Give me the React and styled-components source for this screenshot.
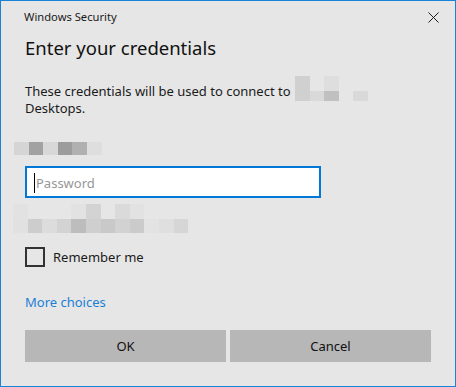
import React from "react"
import styled, { createGlobalStyle } from "styled-components"

const GlobalStyle = createGlobalStyle`
  html, body {
    margin: 0;
    padding: 0;
    background: #e6e6e6;
  }
  body {
    font-family: "Noto Sans", "Open Sans", sans-serif;
    color: #1a1a1a;
  }
`

// pixelated redaction masks, one colour per cell ("" = background)
const nameCells = [
  ["#d0d0d0", "", "#dedede", "", ""],
  ["#d0d0d0", "#d9d9d9", "#c0c0c0", "", "#d9d9d9"],
]
const userCells = [["#d5d5d5", "#a2a2a2", "#d8d8d8", "#9c9c9c", "#b0b0b0", "#dedede"]]
const domainCells = [
  ["#e2e2e2", "", "", "", "#e2e2e2", "#d3d3d3", "", "#dadada", "#e2e2e2", "", "", ""],
  ["#e1e1e1", "#cdcdcd", "#dcdcdc", "#d3d3d3", "#bdbdbd", "#cfcfcf", "#c9c9c9", "#d2d2d2", "#cbcbcb", "#e3e3e3", "#dfdfdf", "#d6d6d6"],
]

const Redaction = ({ rows, heights, className }) => (
  <Mask className={className} $cols={rows[0].length} $heights={heights}>
    {rows.flat().map((c, i) => (
      <Cell key={i} $color={c} />
    ))}
  </Mask>
)

const App = () => {
  return (
    <>
      <GlobalStyle />
      <Window>
        <TitleBar>
          <Title>Windows Security</Title>
          <CloseButton aria-label="Close">
            <svg width="11" height="11" viewBox="0 0 11 11">
              <path d="M0.5 0.5 L10.5 10.5 M10.5 0.5 L0.5 10.5" stroke="#1a1a1a" strokeWidth="1" />
            </svg>
          </CloseButton>
        </TitleBar>

        <Content>
          <Heading>Enter your credentials</Heading>
          <Message>
            These credentials will be used to connect to{" "}
            <InlineMask rows={nameCells} heights="15px 10px" />
            <br />
            Desktops.
          </Message>

          <UserMask rows={userCells} heights="13px" />

          <Field>
            <Caret />
            <Placeholder>Password</Placeholder>
          </Field>

          <DomainMask rows={domainCells} heights="15px 14px" />

          <CheckRow>
            <Box />
            <span>Remember me</span>
          </CheckRow>

          <MoreLink href="#">More choices</MoreLink>

          <Buttons>
            <Button>OK</Button>
            <Button>Cancel</Button>
          </Buttons>
        </Content>
      </Window>
    </>
  )
}

const Window = styled.div`
  box-sizing: border-box;
  width: 456px;
  height: 387px;
  border: 1px solid #1883d7;
  background: #e6e6e6;
  display: flex;
  flex-direction: column;
`

const TitleBar = styled.div`
  display: flex;
  justify-content: space-between;
  align-items: flex-start;
  padding: 8px 16px 0 23px;
  height: 26px;
`

const Title = styled.div`
  font-size: 11.2px;
  line-height: 16px;
`

const CloseButton = styled.div`
  display: flex;
  padding-top: 3px;
`

const Content = styled.div`
  display: flex;
  flex-direction: column;
  align-items: flex-start;
  padding: 0 23px 0 24px;
`

const Heading = styled.h1`
  margin: 0;
  font-size: 18.5px;
  line-height: 26px;
  font-weight: 400;
  color: #111;
`

const Message = styled.p`
  margin: 22px 0 0;
  font-size: 13px;
  line-height: 17px;
`

const Mask = styled.div`
  display: grid;
  grid-template-columns: repeat(${(p) => p.$cols}, 14.6px);
  grid-template-rows: ${(p) => p.$heights};
`

const Cell = styled.div`
  background: ${(p) => p.$color || "transparent"};
`

const InlineMask = styled(Redaction)`
  display: inline-grid;
  vertical-align: top;
  margin: -7px 0 -8px 1px;
`

const UserMask = styled(Redaction)`
  margin: 25px 0 0 -11px;
`

const DomainMask = styled(Redaction)`
  margin: 6px 0 0 -12px;
`

const Field = styled.div`
  box-sizing: border-box;
  margin-top: 11px;
  width: 296px;
  height: 32px;
  border: 2px solid #0078d7;
  background: #fff;
  display: flex;
  align-items: center;
  padding-left: 7px;
`

const Caret = styled.span`
  width: 1px;
  height: 20px;
  margin-top: 2px;
  background: #000;
`

const Placeholder = styled.span`
  margin: 2px 0 0 1px;
  font-size: 13px;
  color: #969696;
`

const CheckRow = styled.label`
  margin-top: 14px;
  display: flex;
  align-items: center;
  gap: 8px;
  font-size: 13px;
  line-height: 20px;
`

const Box = styled.span`
  box-sizing: border-box;
  width: 20px;
  height: 20px;
  border: 2px solid #333;
`

const MoreLink = styled.a`
  margin-top: 26px;
  font-size: 13px;
  line-height: 18px;
  color: #1a7fd5;
  text-decoration: none;
`

const Buttons = styled.div`
  margin-top: 19px;
  display: grid;
  grid-template-columns: 201px 201px;
  gap: 4px;
`

const Button = styled.button`
  height: 32px;
  border: none;
  background: #b7b7b7;
  font-family: inherit;
  font-size: 13px;
  color: #111;
  padding: 0;
`

export default App
